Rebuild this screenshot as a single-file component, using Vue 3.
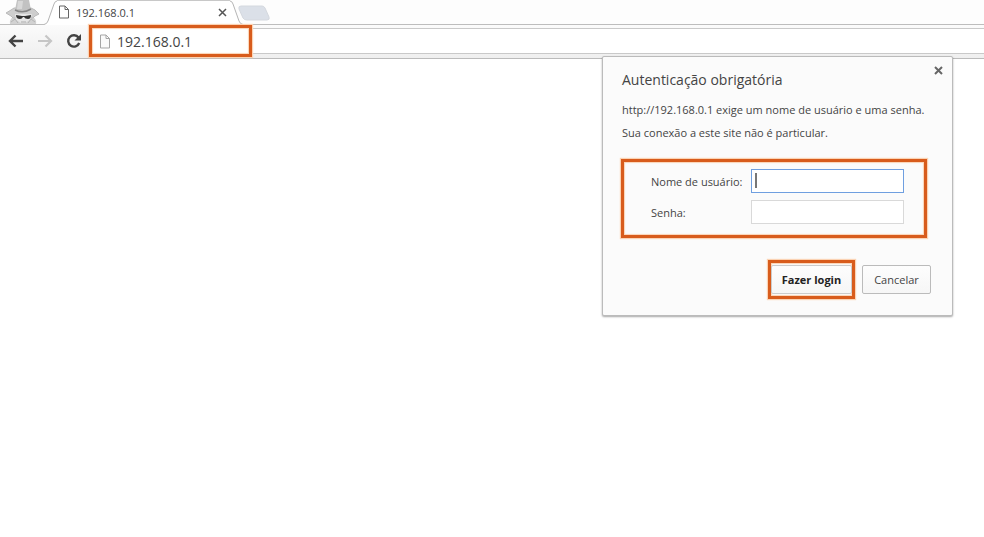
<template>
  <div class="browser">
    <!-- Tab strip -->
    <header class="tab-strip">
      <svg class="incognito" width="44" height="24" viewBox="0 0 44 24" aria-hidden="true">
        <path d="M10 24 Q9 20 13 17 H33 Q37 20 36 24 Z" fill="#d2d2d2" />
        <path d="M6 13 L11 10 L14 8 H31 L35 10 L39 14 L35 16 L33 18 H13 L11 16 Z" fill="#cecece" stroke="#bababa" />
        <path d="M15 10 L17 0 H29 L31 10 Q23 14 15 10 Z" fill="#c2c2c2" />
        <path d="M18 1 H23 L22 9 H17 Z" fill="#d8d8d8" />
        <path d="M15 10 Q23 14 31 9" fill="none" stroke="#858585" stroke-width="1.500" />
        <path d="M15 14 H32 L30 20 L25 23 H21 L16 20 Z" fill="#e6e6e6" />
        <path d="M16 15 L22 16 H25 L31 15 Q31 19 28 19 Q25 19 24 17 H23 Q22 19 20 19 Q16 19 16 15 Z" fill="#333" />
        <path d="M21 22 H26" fill="none" stroke="#aaa" />
        <path d="M11 22 L15 19 L18 23 M35 22 L31 19 L28 23" fill="none" stroke="#b5b5b5" />
      </svg>
      <div class="tab">
        <svg class="tab-edge" width="13" height="25" viewBox="0 0 13 25" aria-hidden="true">
          <path d="M0 24.500 Q3 24 4 21 L10 4 Q11 1 13 1 V25 H0 Z" fill="#fff" />
          <path d="M0 24.500 Q3 24 4 21 L10 4 Q11 1 13 1" fill="none" stroke="#b5b5b5" />
        </svg>
        <div class="tab-body">
          <svg width="12" height="14" viewBox="0 0 12 14" aria-hidden="true">
            <path d="M1.500 1 H7 L10.500 4.500 V13 H1.500 Z M7 1 V4.500 H10.500" fill="#fff" stroke="#666" />
          </svg>
          <span class="tab-title">192.168.0.1</span>
          <button class="icon-button" type="button" aria-label="Fechar guia">
            <svg width="9" height="9" viewBox="0 0 9 9"><path d="M1 1 L8 8 M8 1 L1 8" stroke="#555" stroke-width="1.500" /></svg>
          </button>
        </div>
        <svg class="tab-edge" width="13" height="25" viewBox="0 0 13 25" aria-hidden="true">
          <path d="M13 24.500 Q10 24 9 21 L3 4 Q2 1 0 1 V25 H13 Z" fill="#fff" />
          <path d="M13 24.500 Q10 24 9 21 L3 4 Q2 1 0 1" fill="none" stroke="#b5b5b5" />
        </svg>
      </div>
      <button class="icon-button new-tab" type="button" aria-label="Nova guia">
        <svg width="32" height="16" viewBox="0 0 32 16">
          <path d="M3 1 H24 Q26 1 27 3 L31 12 Q32 15 29 15 H9 Q6 15 5 13 L1 4 Q0 1 3 1 Z" fill="#dbe0e8" stroke="#d4d8de" />
        </svg>
      </button>
    </header>

    <!-- Toolbar -->
    <nav class="toolbar">
      <button class="icon-button" type="button" aria-label="Voltar">
        <svg width="16" height="14" viewBox="0 0 16 14"><path d="M7.500 1.500 L2 7 L7.500 12.500 M2 7 H15" fill="none" stroke="#444" stroke-width="2.400" /></svg>
      </button>
      <button class="icon-button" type="button" aria-label="Avançar">
        <svg width="16" height="14" viewBox="0 0 16 14"><path d="M8.500 1.500 L14 7 L8.500 12.500 M14 7 H1" fill="none" stroke="#c6c6c6" stroke-width="2.200" /></svg>
      </button>
      <button class="icon-button" type="button" aria-label="Recarregar">
        <svg width="16" height="16" viewBox="0 0 16 16">
          <path d="M12.500 4.500 A5.700 5.700 0 1 0 13.200 10" fill="none" stroke="#444" stroke-width="2.400" />
          <path d="M15 1 V7.500 H8.500 Z" fill="#444" />
        </svg>
      </button>
      <div class="omnibox">
        <label class="address marked">
          <svg width="12" height="15" viewBox="0 0 12 15" aria-hidden="true">
            <path d="M1.500 1 H7 L10.500 4.500 V14 H1.500 Z M7 1 V4.500 H10.500" fill="#fafafa" stroke="#a5a5a5" />
          </svg>
          <input v-model="address" type="text" aria-label="Endereço" />
        </label>
      </div>
    </nav>

    <!-- Page with the authentication prompt -->
    <main class="page">
      <form class="dialog" role="dialog" aria-labelledby="auth-title" @submit.prevent>
        <button class="icon-button dialog-close" type="button" aria-label="Fechar">
          <svg width="9" height="9" viewBox="0 0 9 9"><path d="M1 1 L8 8 M8 1 L1 8" stroke="#666" stroke-width="2" /></svg>
        </button>
        <h1 id="auth-title">Autenticação obrigatória</h1>
        <p>http://192.168.0.1 exige um nome de usuário e uma senha.</p>
        <p>Sua conexão a este site não é particular.</p>
        <div class="fields marked">
          <label for="username">Nome de usuário:</label>
          <div class="field">
            <input id="username" v-model="username" class="active" type="text" />
            <span class="caret"></span>
          </div>
          <label for="password">Senha:</label>
          <div class="field">
            <input id="password" v-model="password" type="password" />
          </div>
        </div>
        <div class="actions">
          <div class="marked">
            <button class="action primary" type="submit">Fazer login</button>
          </div>
          <button class="action" type="button">Cancelar</button>
        </div>
      </form>
    </main>
  </div>
</template>

<script setup>
import { ref } from 'vue';

const address = ref('192.168.0.1');
const username = ref('');
const password = ref('');
</script>

<style>
body {
  background: #fff;
}
</style>

<style scoped>
.browser {
  min-height: 100vh;
  font-family: "Open Sans", "Noto Sans", sans-serif;
  font-size: 11px;
  color: #444;
}

.browser * {
  box-sizing: border-box;
}

svg {
  display: block;
  flex: none;
}

button,
input {
  font: inherit;
  color: inherit;
}

input {
  min-width: 0;
  outline: none;
}

.icon-button {
  flex: none;
  padding: 0;
  border: 0;
  background: none;
}

.marked {
  border: 3px solid #d85c1c;
  box-shadow: 0 0 1px 1px #fbd3b4, inset 0 0 1px 1px #fbd3b4;
}

/* Tab strip */
.tab-strip {
  display: flex;
  height: 25px;
  border-bottom: 1px solid #bdbdbd;
  background: #fdfdfd;
}

.tab {
  display: flex;
  width: 199px;
  height: 25px;
}

.tab-body {
  flex: 1;
  display: flex;
  align-items: center;
  gap: 6px;
  padding: 0 3px 2px 1px;
  border-top: 1px solid #c8c8c8;
  background: #fff;
}

.tab-title {
  flex: 1;
}

.new-tab {
  align-self: flex-start;
  margin: 5px 0 0 -5px;
}

/* Toolbar */
.toolbar {
  display: flex;
  align-items: center;
  gap: 13px;
  height: 34px;
  padding: 0 0 1px 8px;
  border-bottom: 1px solid #bbb;
  background: linear-gradient(#fbfbfb, #efefef);
}

.omnibox {
  flex: 1;
  display: flex;
  align-items: center;
  height: 26px;
  margin-left: -6px;
  border: solid #c9c9c9;
  border-width: 1px 0;
  background: #fff;
}

.address {
  display: flex;
  align-items: center;
  gap: 6px;
  flex: none;
  width: 163px;
  height: 32px;
  padding: 0 7px;
  background: #fff;
}

.address input {
  flex: 1;
  padding: 0;
  border: 0;
  font-size: 14px;
  background: none;
}

/* Dialog */
.page {
  position: relative;
}

.dialog {
  position: absolute;
  top: -3px;
  right: 31px;
  width: 351px;
  padding: 15px 21px 16px 19px;
  border: 1px solid #bbb;
  border-radius: 2px;
  background: #fbfbfb;
  box-shadow: 0 1px 2px rgba(0, 0, 0, 0.35);
}

.dialog-close {
  position: absolute;
  top: 9px;
  right: 9px;
}

h1 {
  margin: 0 0 14px;
  font-size: 14px;
  font-weight: 400;
  line-height: 16px;
}

p {
  margin: 0 0 7px;
  line-height: 16px;
  white-space: nowrap;
}

.fields {
  display: grid;
  grid-template-columns: 100px 153px;
  align-items: center;
  row-gap: 7px;
  width: 306px;
  margin: 18px 0 22px -1px;
  padding: 7px 0 11px 27px;
}

.field {
  position: relative;
}

.field input {
  display: block;
  width: 100%;
  height: 24px;
  padding: 0 4px;
  border: 1px solid #d9d9d9;
  background: #fff;
}

.field input.active {
  border-color: #6f9fe0;
}

.caret {
  position: absolute;
  top: 4px;
  left: 4px;
  width: 2px;
  height: 15px;
  background: #777;
}

.actions {
  display: flex;
  justify-content: flex-end;
  align-items: center;
  gap: 7px;
}

.action {
  display: block;
  width: 69px;
  height: 29px;
  padding: 0;
  border: 1px solid #bbb;
  border-radius: 2px;
  background: linear-gradient(#fdfdfd, #f6f6f6);
}

.actions .marked {
  padding: 2px 0;
}

.action.primary {
  width: 81px;
  border-color: #ccc;
  font-weight: 700;
  color: #222;
}
</style>
